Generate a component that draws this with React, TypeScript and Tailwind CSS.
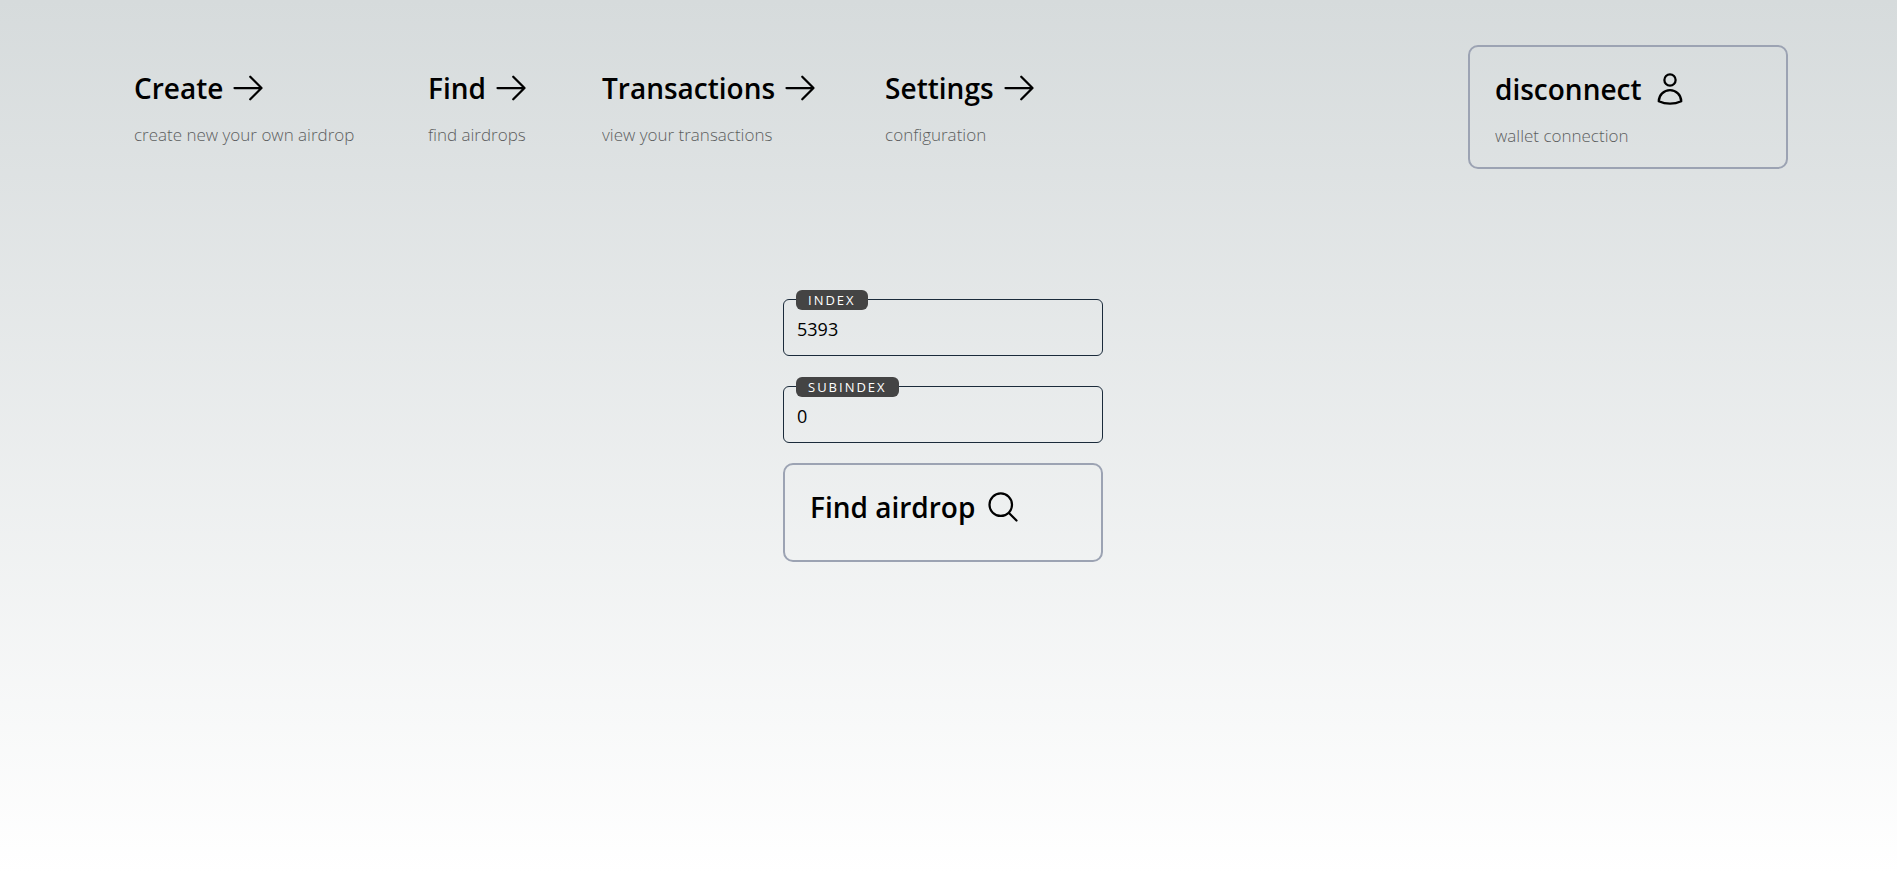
import { useState } from 'react'
import type { ReactNode } from 'react'

const ICONS = {
  arrow: ['M13.5 4.5 21 12m0 0-7.5 7.5M21 12H3'],
  search: ['m21 21-5.197-5.197m0 0A7.5 7.5 0 1 0 5.196 5.196a7.5 7.5 0 0 0 10.607 10.607Z'],
  user: [
    'M15.75 6a3.75 3.75 0 1 1-7.5 0 3.75 3.75 0 0 1 7.5 0Z',
    'M4.501 20.118a7.5 7.5 0 0 1 14.998 0A17.933 17.933 0 0 1 12 21.75c-2.676 0-5.216-.584-7.499-1.632Z',
  ],
}

function Icon({ name }: { name: keyof typeof ICONS }) {
  return (
    <svg
      className="size-9 shrink-0"
      viewBox="0 0 24 24"
      fill="none"
      stroke="currentColor"
      strokeWidth={1.5}
      strokeLinecap="round"
      strokeLinejoin="round"
      aria-hidden="true"
    >
      {ICONS[name].map((d) => (
        <path key={d} d={d} />
      ))}
    </svg>
  )
}

function Title({ children }: { children: ReactNode }) {
  return <span className="flex items-center text-[28px] leading-9 font-semibold whitespace-nowrap">{children}</span>
}

function Caption({ children }: { children: ReactNode }) {
  return <span className="mt-[15px] block text-[17px] leading-7 font-light whitespace-nowrap opacity-60">{children}</span>
}

const LINKS = [
  { title: 'Create', caption: 'create new your own airdrop', width: 'min-w-[227px]' },
  { title: 'Find', caption: 'find airdrops', width: 'min-w-[107px]' },
  { title: 'Transactions', caption: 'view your transactions', width: 'min-w-[216px]' },
  { title: 'Settings', caption: 'configuration', width: 'min-w-[150px]' },
]

function Field({ id, label, initial }: { id: string; label: string; initial: string }) {
  const [value, setValue] = useState(initial)
  return (
    <div className="relative">
      <label
        htmlFor={id}
        className="absolute -top-[9px] left-[13px] rounded-md bg-[#444] px-3 text-[13px] leading-5 font-medium tracking-[2px] text-white uppercase"
      >
        {label}
      </label>
      <input
        id={id}
        type="text"
        inputMode="numeric"
        value={value}
        onChange={(e) => setValue(e.target.value)}
        className="block h-[57px] w-full rounded-md border border-[#1b2b3b] bg-transparent px-[13px] pt-0.5 text-lg outline-none"
      />
    </div>
  )
}

export default function App() {
  return (
    <div className="min-h-screen bg-linear-to-b from-[#d6dbdc] to-white font-['Open_Sans','Noto_Sans',sans-serif] text-black">
      <header className="flex items-start justify-between pt-[45px] pr-[109px] pl-[134px]">
        <nav className="flex gap-[67px] pt-[25px]">
          {LINKS.map((link) => (
            <a key={link.title} href="#" className={link.width}>
              <Title>
                <span className="mr-[7px]">{link.title}</span>
                <Icon name="arrow" />
              </Title>
              <Caption>{link.caption}</Caption>
            </a>
          ))}
        </nav>
        <button type="button" className="w-80 rounded-[10px] border-2 border-[#9ca3b3] px-[25px] pt-6 pb-[17px] text-left">
          <Title>
            <span className="mr-2.5">disconnect</span>
            <Icon name="user" />
          </Title>
          <Caption>wallet connection</Caption>
        </button>
      </header>
      <main className="flex justify-center pt-[130px] pr-[11px]">
        <form className="w-80" onSubmit={(e) => e.preventDefault()}>
          <div className="space-y-[30px]">
            <Field id="index" label="Index" initial="5393" />
            <Field id="subindex" label="Subindex" initial="0" />
          </div>
          <button type="submit" className="mt-5 w-full rounded-[10px] border-2 border-[#9ca3b3] px-[25px] pt-6 pb-[35px] text-left">
            <Title>
              <span className="mr-2.5">Find airdrop</span>
              <Icon name="search" />
            </Title>
          </button>
        </form>
      </main>
    </div>
  )
}
